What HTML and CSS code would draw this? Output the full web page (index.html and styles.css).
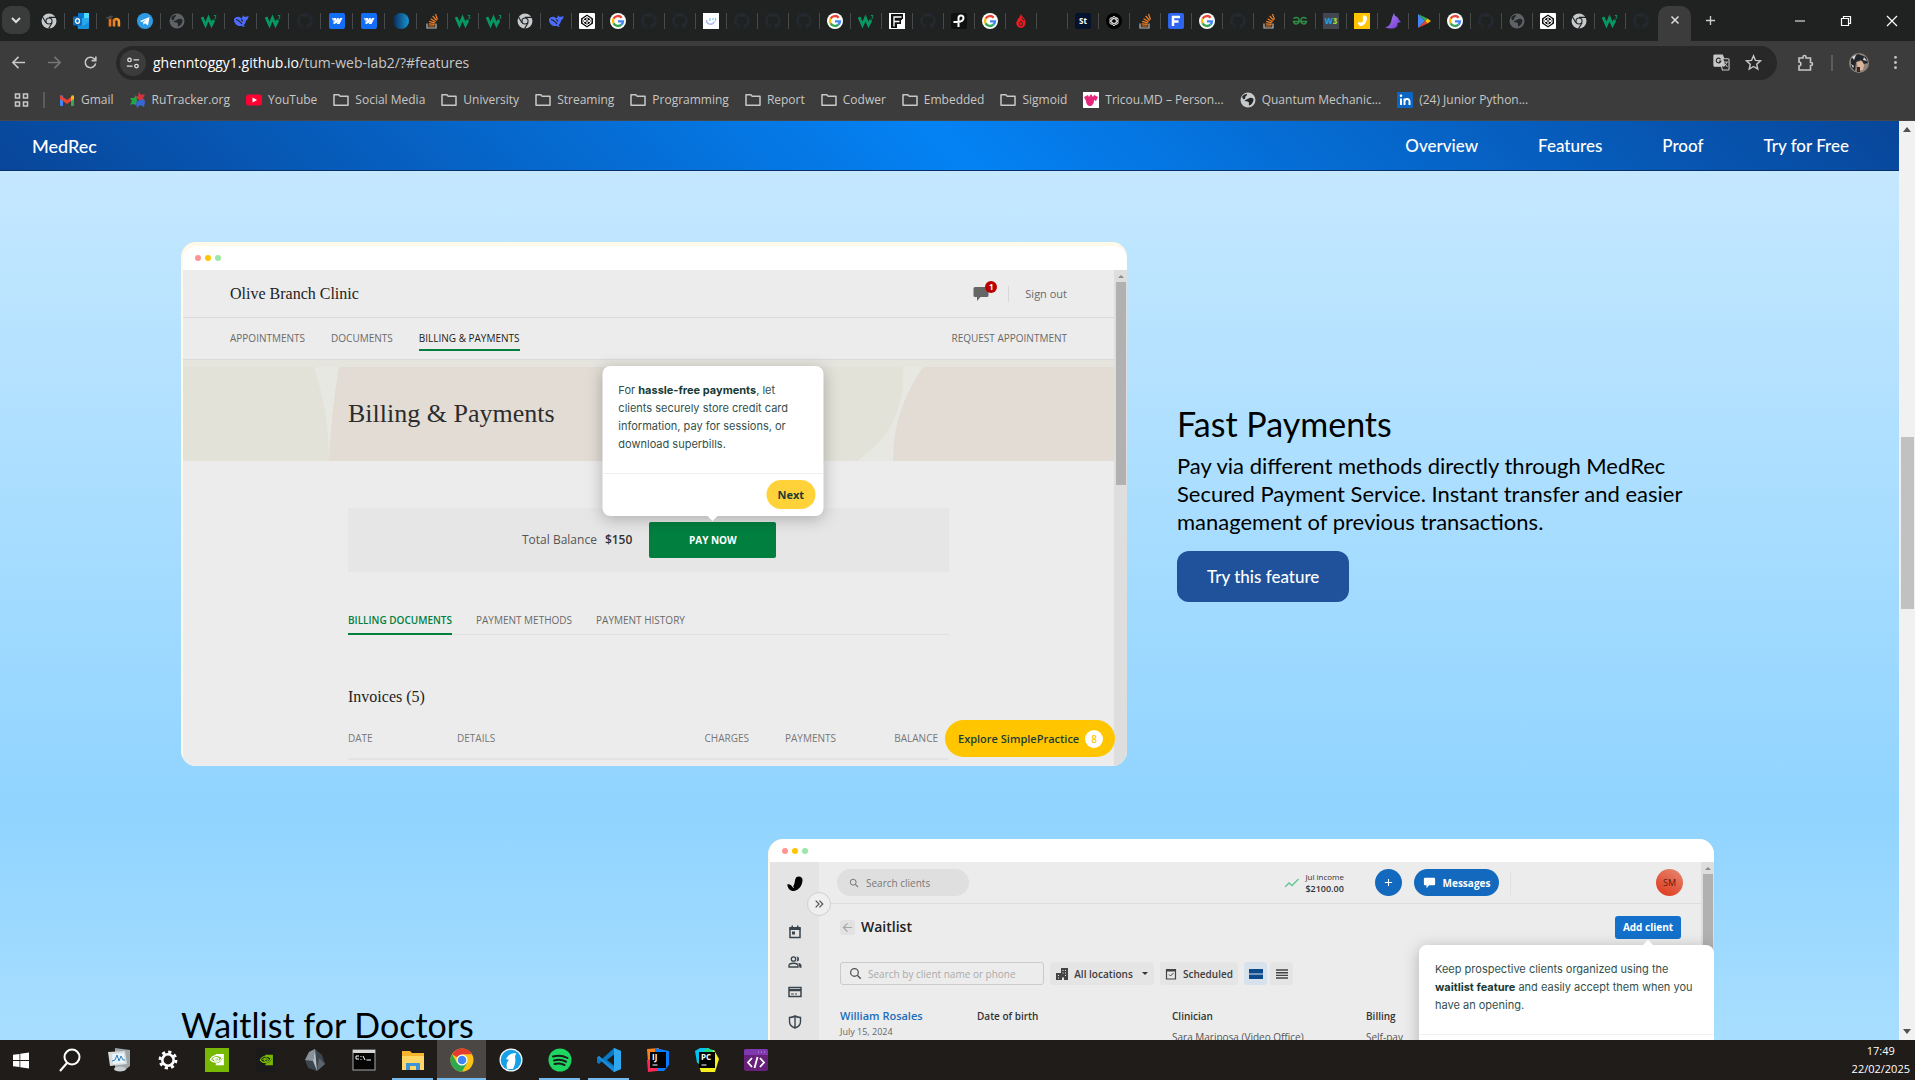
FILE: index.html
```html
<!DOCTYPE html>
<html lang="en">
<head>
<meta charset="utf-8">
<meta name="viewport" content="width=device-width, initial-scale=1">
<title>MedRec</title>
<link rel="stylesheet" href="styles.css">
</head>
<body>
<svg class="sprite" aria-hidden="true">
  <defs>
    <linearGradient id="g-orb"><stop offset="0" stop-color="#0a2a55"/><stop offset="1" stop-color="#1795d6"/></linearGradient>
    <linearGradient id="g-moodle"><stop offset="0" stop-color="#e8731a"/><stop offset="1" stop-color="#f79a32"/></linearGradient>
    <linearGradient id="g-uni" x2="1" y2="1"><stop offset="0" stop-color="#b78cff"/><stop offset="1" stop-color="#6c35c9"/></linearGradient>
  </defs>
  <symbol id="chrome-mono" viewBox="0 0 16 16"><circle cx="8" cy="8" r="7.5" fill="#c7cacd"/><circle cx="8" cy="8" r="3.6" fill="#1f2221"/><circle cx="8" cy="8" r="2.5" fill="#c7cacd"/><path d="M8 4.4h7M4.9 9.8 1.4 3.8M11.1 9.8 7.6 15.6" stroke="#1f2221" stroke-width="1.1"/></symbol>
  <symbol id="outlook" viewBox="0 0 16 16"><rect x="5" y="0" width="11" height="15" rx="1" fill="#28a8ea"/><path d="M5 0h6v5H5z" fill="#0078d4"/><path d="M11 0h5v5h-5z" fill="#50d9ff"/><path d="M4 9l6 4 6-4v6a1 1 0 0 1-1 1H5z" fill="#1490df"/><rect x="0" y="3.500" width="9" height="9" rx="1" fill="#0f6cbd"/><ellipse cx="4.500" cy="8" rx="2" ry="2.300" fill="none" stroke="#fff" stroke-width="1.300"/></symbol>
  <symbol id="moodle" viewBox="0 0 16 16"><path d="M5 13.500V5.500M9 13.500V8.500a2.400 2.400 0 0 1 4.900 0V13.500" fill="none" stroke="url(#g-moodle)" stroke-width="2.600"/><path d="M9 8.500V6" stroke="#e8731a" stroke-width="2.600"/><path d="M0 5l6-2.500 2.500 1L4.500 6.500z" fill="#4b4743"/></symbol>
  <symbol id="telegram" viewBox="0 0 16 16"><circle cx="8" cy="8" r="8" fill="#2f9be6"/><path d="M3 8l9.500-4L11 12.500 8 10.300l-1.500 1.500-.4-2.500L10.500 6 5 9z" fill="#fff"/></symbol>
  <symbol id="globe" viewBox="0 0 16 16"><circle cx="8" cy="8" r="7.500" fill="currentColor"/><path d="M2 5c1-1.500 3-3 5-3.200 0 1.700-.5 2.200-1.500 2.700S6 6.500 4.500 7 3 6.500 2 5zM8.500 6.500c1.500-1 3.500-1 5 .5 0 3-2 6-4.500 6.500-.5-1.500.5-2.500-.5-3.500S5 9.500 4.500 8.500" fill="#232625"/></symbol>
  <symbol id="w3s" viewBox="0 0 16 16"><path d="M1 4l3.500 8L7.500 5l3 7 2.500-5" fill="none" stroke="#059862" stroke-width="2.800"/><path d="M12.800 2.500h2.200l-1 1.500c1.500 0 1.300 2-.8 1.800" fill="none" stroke="#059862" stroke-width=".9"/></symbol>
  <symbol id="whale" viewBox="0 0 16 16"><path d="M1 6c2-2.500 5-3 7.500-.5C10 4 9.500 3 10 2c.5 1 1 1.800 2 1.800 1.500.1 2.500-.4 3.500-1C15.500 6 14 7 13 7.500c-.3 2-1 3.500-2.500 4.500l1.300 1.500c-1 .6-2.300.2-3.300-.7-4 1.200-8-2.500-7.500-6.800z" fill="#4d6bfe"/><path d="M3 6.500c3 .5 4.500 3 6 4.500M8 7c1-.3 2 .5 1.500 1.600" fill="none" stroke="#1f2221" stroke-width="1.100"/></symbol>
  <symbol id="cat" viewBox="0 0 16 16"><path d="M8 0C3.600 0 0 3.600 0 8c0 3.500 2.300 6.500 5.500 7.600.4.100.5-.2.500-.4v-1.500c-2.200.5-2.700-.9-2.700-.9-.4-.9-.9-1.200-.9-1.200-.7-.5.1-.5.1-.5.800.1 1.200.8 1.200.8.700 1.200 1.900.9 2.300.7.100-.5.300-.9.500-1.100-1.800-.2-3.600-.9-3.600-4 0-.9.300-1.600.8-2.100-.1-.2-.4-1 .1-2.100 0 0 .7-.2 2.200.8a7.600 7.600 0 0 1 4 0c1.500-1 2.200-.8 2.200-.8.400 1.100.2 1.900.1 2.100.5.600.8 1.300.8 2.100 0 3.100-1.900 3.700-3.700 3.900.300.300.6.800.6 1.500v2.200c0 .2.100.5.600.4A8 8 0 0 0 8 0z" fill="#24292f"/></symbol>
  <symbol id="webflow" viewBox="0 0 16 16"><rect width="16" height="16" rx="2" fill="#146ef5"/><path d="M13.500 5l-3 6H7.700L9 8.500C8 10 6.500 11 4.500 11V8.600s1.300-.1 2-.9H4.500V5H7v2l1-2h1.800v2l1.200-2z" fill="#fff"/><path d="M3 5h1.500v4z" fill="#fff"/></symbol>
  <symbol id="orb" viewBox="0 0 16 16"><circle cx="8" cy="8" r="8" fill="url(#g-orb)"/></symbol>
  <symbol id="stack" viewBox="0 0 16 16"><path d="M3 10.500V15h9v-4.500" fill="none" stroke="#bcbbbb" stroke-width="1.200"/><path d="M4.500 13h6M4.700 10.800l6 .6M5.200 8.300l5.600 1.600M6.600 5.700l5 3M8.700 3l3.900 4.500M11.500 1l2 5.500" stroke="#f48024" stroke-width="1.200"/></symbol>
  <symbol id="codepen" viewBox="0 0 16 16"><rect width="16" height="16" rx="1" fill="#fff"/><path d="M8 1.500l6 4v5l-6 4-6-4v-5z" fill="#111"/><path d="M8 3.500l4 2.700v3.600l-4 2.700-4-2.700V6.200zM8 3.500v3M8 9.500v3M4 6.200l4 3.300 4-3.300M4 9.800l4-3.300 4 3.300" fill="none" stroke="#fff" stroke-width="1"/></symbol>
  <symbol id="google" viewBox="0 0 16 16"><circle cx="8" cy="8" r="8" fill="#fff"/><g fill="none" stroke-width="2.300"><path d="M11.700 4.700A5 5 0 0 0 3.600 5.600" stroke="#ea4335"/><path d="M3.600 5.600a5 5 0 0 0 0 4.800" stroke="#fbbc05"/><path d="M3.600 10.400a5 5 0 0 0 7.800 1.200" stroke="#34a853"/><path d="M11.400 11.600A5 5 0 0 0 13 8.300H8" stroke="#4285f4"/></g></symbol>
  <symbol id="smile" viewBox="0 0 16 16"><rect width="16" height="16" fill="#fff"/><path d="M3.500 7c0 5 6 5.500 8 1.500" fill="none" stroke="#a7b7ef" stroke-width="1.500"/><path d="M7 5v3M10 5v2M12.500 5v3" stroke="#7ccbe8" stroke-width="1.200"/></symbol>
  <symbol id="flourish" viewBox="0 0 16 16"><rect width="16" height="16" fill="#fff"/><path d="M2 1h12v5h-1v1h-1v4H8v4H2z" fill="#111"/><path d="M5 13.500V4h7.500M5 8.500h5.500" fill="none" stroke="#fff" stroke-width="1.300"/></symbol>
  <symbol id="pin" viewBox="0 0 16 16"><rect width="16" height="16" rx="2" fill="#101010"/><path d="M7.500 14V5c0-3.500 5-3.500 5 0s-4 4-7 4H2.500" fill="none" stroke="#fff" stroke-width="2"/></symbol>
  <symbol id="flame" viewBox="0 0 16 16"><path d="M8 1c1 3 4 4 4.500 7.500C13 12 11 15 8 15s-5.500-3-4.500-6C4 6.500 7 4 8 1z" fill="#e91c24"/><path d="M8 8c-2 2-2 4 0 5 2-1 2-3 0-5M9 5l2 3" stroke="#1f2221" fill="none"/></symbol>
  <symbol id="knot" viewBox="0 0 16 16"><circle cx="8" cy="8" r="8" fill="#000"/><g fill="none" stroke="#ddd" stroke-width=".9"><ellipse cx="8" cy="8" rx="2.300" ry="4.600"/><ellipse cx="8" cy="8" rx="2.300" ry="4.600" transform="rotate(60 8 8)"/><ellipse cx="8" cy="8" rx="2.300" ry="4.600" transform="rotate(120 8 8)"/></g></symbol>
  <symbol id="fblue" viewBox="0 0 16 16"><rect width="16" height="16" rx="2" fill="#2f65ee"/><path d="M5 13V4h7M5 8.500h5.500" fill="none" stroke="#fff" stroke-width="2.500"/></symbol>
  <symbol id="gfg" viewBox="0 0 16 16"><path d="M1.500 5.500c4-2.500 6 0 5.500 3s-5 3.500-5.500 0h13c-.5 3.500-5 3-5.500 0s1.500-5.500 5.500-3" fill="none" stroke="#2f8d46" stroke-width="1.500"/></symbol>
  <symbol id="yellow" viewBox="0 0 16 16"><rect width="16" height="16" fill="#ffc400"/><path d="M9 3c2-1 4 0 4 2 0 4-3 8-6 8-2 0-3.500-2-3-4 2 1 4 .5 5-1 0-2-.5-3.500 0-5z" fill="#fff"/></symbol>
  <symbol id="unicorn" viewBox="0 0 16 16"><path d="M9 0l1 3c2 .5 3.500 2 4 4l2 2-3.500 1c.5 3-1 5-4 5.500-3 .3-5.500 0-8.500-1.500 3 0 5-2 6-5C6.500 6 7.500 3 9 0z" fill="url(#g-uni)"/></symbol>
  <symbol id="play" viewBox="0 0 16 16"><path d="M2 1v14l7-7z" fill="#4285f4"/><path d="M2 1l7 7 2.500-2.500z" fill="#34a853"/><path d="M2 15l7-7 2.500 2.500z" fill="#ea4335"/><path d="M11.500 5.500L15 8l-3.500 2.500L9 8z" fill="#fbbc04"/></symbol>
  <symbol id="folder" viewBox="0 0 16 16"><path d="M1 2.800h4.800l1.400 1.500H15v9H1z" fill="none" stroke="#c7c7c7" stroke-width="1.500" stroke-linejoin="round"/></symbol>
  <symbol id="magnifier" viewBox="0 0 16 16"><circle cx="6.700" cy="6.700" r="4.700" fill="none" stroke="currentColor" stroke-width="1.600"/><path d="M10.200 10.200L14.500 14.500" stroke="currentColor" stroke-width="1.800"/></symbol>
  <symbol id="bubble" viewBox="0 0 16 16"><path d="M2 1h12a1.500 1.500 0 0 1 1.500 1.500v7A1.500 1.500 0 0 1 14 11H7.500L4 15v-4H2A1.500 1.500 0 0 1 .5 9.500v-7A1.500 1.500 0 0 1 2 1z" fill="currentColor"/></symbol>
  <symbol id="nv" viewBox="0 0 24 24"><path d="M1 12c4-7 11-9 19-3-3 8-13 10-19 3z" fill="none" stroke="currentColor" stroke-width="2"/><path d="M5 12c3-4 7-5 10-1-2 5-6 4-7 1 1-2 3-2 4 0" fill="none" stroke="currentColor" stroke-width="2"/><path d="M10 3h13v18H10v-3c5 0 9-3 11-8-3-3-6-4-11-4z" fill="currentColor"/></symbol>
</svg>

<header class="browser">
  <div class="tabstrip">
    <button class="tab-search" aria-label="Search tabs"><svg viewBox="0 0 12 12"><path d="M2 4l4 4 4-4" fill="none" stroke="#ddd" stroke-width="2"/></svg></button>
    <nav class="tabs wide" aria-label="Pinned tabs">
      <button class="tab"><svg><use href="#chrome-mono"/></svg></button>
      <button class="tab"><svg><use href="#outlook"/></svg></button>
      <button class="tab"><svg><use href="#moodle"/></svg></button>
      <button class="tab"><svg><use href="#telegram"/></svg></button>
      <button class="tab dim"><svg><use href="#globe"/></svg></button>
      <button class="tab"><svg><use href="#w3s"/></svg></button>
      <button class="tab"><svg><use href="#whale"/></svg></button>
      <button class="tab"><svg><use href="#w3s"/></svg></button>
      <button class="tab"><svg><use href="#cat"/></svg></button>
      <button class="tab"><svg><use href="#webflow"/></svg></button>
      <button class="tab"><svg><use href="#webflow"/></svg></button>
      <button class="tab"><svg><use href="#orb"/></svg></button>
    </nav>
    <nav class="tabs" aria-label="Open tabs">
      <button class="tab"><svg><use href="#stack"/></svg></button>
      <button class="tab"><svg><use href="#w3s"/></svg></button>
      <button class="tab"><svg><use href="#w3s"/></svg></button>
      <button class="tab"><svg><use href="#chrome-mono"/></svg></button>
      <button class="tab"><svg><use href="#whale"/></svg></button>
      <button class="tab"><svg><use href="#codepen"/></svg></button>
      <button class="tab"><svg><use href="#google"/></svg></button>
      <button class="tab"><svg><use href="#cat"/></svg></button>
      <button class="tab"><svg><use href="#cat"/></svg></button>
      <button class="tab"><svg><use href="#smile"/></svg></button>
      <button class="tab"><svg><use href="#cat"/></svg></button>
      <button class="tab"><svg><use href="#cat"/></svg></button>
      <button class="tab"><svg><use href="#cat"/></svg></button>
      <button class="tab"><svg><use href="#google"/></svg></button>
      <button class="tab"><svg><use href="#w3s"/></svg></button>
      <button class="tab"><svg><use href="#flourish"/></svg></button>
      <button class="tab"><svg><use href="#cat"/></svg></button>
      <button class="tab"><svg><use href="#pin"/></svg></button>
      <button class="tab"><svg><use href="#google"/></svg></button>
      <button class="tab"><svg><use href="#flame"/></svg></button>
      <button class="tab"></button>
      <button class="tab"><svg viewBox="0 0 16 16"><rect width="16" height="16" rx="2" fill="#04122b"/><text x="8" y="11" font-size="8" font-weight="700" text-anchor="middle" fill="#fff">St</text></svg></button>
      <button class="tab"><svg><use href="#knot"/></svg></button>
      <button class="tab"><svg><use href="#stack"/></svg></button>
      <button class="tab"><svg><use href="#fblue"/></svg></button>
      <button class="tab"><svg><use href="#google"/></svg></button>
      <button class="tab"><svg><use href="#cat"/></svg></button>
      <button class="tab"><svg><use href="#stack"/></svg></button>
      <button class="tab"><svg><use href="#gfg"/></svg></button>
      <button class="tab"><svg viewBox="0 0 16 16"><rect width="16" height="16" fill="#41464f"/><text x="8" y="11" font-size="8" font-weight="800" text-anchor="middle" fill="#1f9be0">W<tspan fill="#9bd038">3</tspan></text></svg></button>
      <button class="tab"><svg><use href="#yellow"/></svg></button>
      <button class="tab"><svg><use href="#unicorn"/></svg></button>
      <button class="tab"><svg><use href="#play"/></svg></button>
      <button class="tab"><svg><use href="#google"/></svg></button>
      <button class="tab"><svg><use href="#cat"/></svg></button>
      <button class="tab dim"><svg><use href="#globe"/></svg></button>
      <button class="tab"><svg><use href="#codepen"/></svg></button>
      <button class="tab"><svg><use href="#chrome-mono"/></svg></button>
      <button class="tab"><svg><use href="#w3s"/></svg></button>
      <button class="tab last"><svg><use href="#cat"/></svg></button>
    </nav>
    <button class="tab-active" aria-label="Close tab"><svg viewBox="0 0 10 10"><path d="M1.500 1.500l7 7M8.500 1.500l-7 7" stroke="#ddd" stroke-width="1.500"/></svg></button>
    <button class="new-tab" aria-label="New tab"><svg viewBox="0 0 12 12"><path d="M6 1v10M1 6h10" stroke="#ccc" stroke-width="1.500"/></svg></button>
    <div class="window-controls">
      <button aria-label="Minimize"><svg viewBox="0 0 12 12"><path d="M1 6h10" stroke="#fff"/></svg></button>
      <button aria-label="Restore"><svg viewBox="0 0 12 12"><path d="M1.500 3.500h7v7h-7zM3.500 3.500v-2h7v7h-2" fill="none" stroke="#fff" stroke-width="1.200"/></svg></button>
      <button aria-label="Close"><svg viewBox="0 0 12 12"><path d="M1 1l10 10M11 1L1 11" stroke="#fff" stroke-width="1.200"/></svg></button>
    </div>
  </div>

  <div class="toolbar">
    <button class="tool" aria-label="Back"><svg viewBox="0 0 16 16"><path d="M15 8H2.500M8 2L2 8l6 6" fill="none" stroke="#c7c7c7" stroke-width="1.700"/></svg></button>
    <button class="tool" aria-label="Forward"><svg viewBox="0 0 16 16"><path d="M1 8h12.500M8 2l6 6-6 6" fill="none" stroke="#767676" stroke-width="1.700"/></svg></button>
    <button class="tool" aria-label="Reload"><svg viewBox="0 0 16 16"><path d="M13.500 9A5.600 5.600 0 1 1 12 4l1.500 1.800M13.700 1.500V6H9.200" fill="none" stroke="#c7c7c7" stroke-width="1.700"/></svg></button>
    <div class="omnibox">
      <button class="site-info" aria-label="Site information"><svg viewBox="0 0 16 16"><g fill="none" stroke="#ddd" stroke-width="1.500"><circle cx="4" cy="4.500" r="2"/><circle cx="12" cy="11.500" r="2"/><path d="M8.500 4.500H15M1 11.500h6.500"/></g></svg></button>
      <span class="url">ghenntoggy1.github.io<span class="path">/tum-web-lab2/?#features</span></span>
      <button class="omni-btn" aria-label="Translate"><svg viewBox="0 0 18 18"><path d="M2 1h8l1.500 4H16a1 1 0 0 1 1 1v10a1 1 0 0 1-1 1h-6l-1-4H2a1 1 0 0 1-1-1V2a1 1 0 0 1 1-1z" fill="none" stroke="#c7c7c7" stroke-width="1.200"/><path d="M1 1h9l3 12H1z" fill="#c7c7c7"/><path d="M8 5.500a2.500 2.500 0 1 0 .3 2H6.500" fill="none" stroke="#282828" stroke-width="1.200"/><path d="M11.500 8.500H16M14.500 8.500c0 2-2 4-3.500 4.500M12.500 10l3 4" fill="none" stroke="#c7c7c7"/></svg></button>
      <button class="omni-btn" aria-label="Bookmark"><svg viewBox="0 0 18 18"><path d="M9 2l2.100 4.800 5.200.5-3.900 3.500 1.100 5.100L9 13.200l-4.500 2.700 1.100-5.100L1.700 7.300l5.200-.5z" fill="none" stroke="#c7c7c7" stroke-width="1.500"/></svg></button>
    </div>
    <button class="tool ext" aria-label="Extensions"><svg viewBox="0 0 18 18"><path d="M3 4h4V3a1.500 1.500 0 0 1 3 0v1h4.500v4.500h.5a1.500 1.500 0 0 1 0 3h-.5V16H3v-4c2.500 0 2.500-4 0-4z" fill="none" stroke="#c7c7c7" stroke-width="1.600"/></svg></button>
    <span class="divider"></span>
    <button class="tool" aria-label="Profile"><svg class="avatar" viewBox="0 0 20 20"><circle cx="10" cy="10" r="10" fill="#8d8278"/><path d="M2 6l7-5 8 3 2 6-4 1-3-4-5 2-1 9-4-4z" fill="#23262b"/><path d="M8 9l5-1 2 4-1 5-5 1z" fill="#dbb49b"/><path d="M3 4l4-2-2 5zM15 4l3 4-4-1zM2 11l3 2-1 2z" fill="#d8dadd"/><path d="M8 14h3v5H8z" fill="#38281f"/></svg></button>
    <button class="tool more" aria-label="Menu"><svg viewBox="0 0 16 16"><g fill="#c7c7c7"><circle cx="8" cy="2.500" r="1.500"/><circle cx="8" cy="8" r="1.500"/><circle cx="8" cy="13.500" r="1.500"/></g></svg></button>
  </div>

  <nav class="bookmarks" aria-label="Bookmarks">
    <button class="apps" aria-label="Apps"><svg viewBox="0 0 14 14"><g fill="none" stroke="#c7c7c7" stroke-width="1.600"><path d="M1 1h4v4H1zM9 1h4v4H9zM1 9h4v4H1zM9 9h4v4H9z"/></g></svg></button>
    <span class="divider"></span>
    <a href="#gmail"><svg viewBox="0 0 16 16"><path d="M1 3.500h3V14H2a1 1 0 0 1-1-1z" fill="#4285f4"/><path d="M12 3.500h3V13a1 1 0 0 1-1 1h-2z" fill="#34a853"/><path d="M1 3l3 2 4 3 4-3v4l-4 3-4-3-3-2z" fill="#ea4335"/><path d="M12 5l1.500-1.700L15 4v3l-3 2z" fill="#fbbc04"/></svg>Gmail</a>
    <a href="#rutracker"><svg viewBox="0 0 16 16"><path d="M9 0l2 3 4-1-2 4 2 3-6-1-4-3 3-1z" fill="#d3353c"/><path d="M0 6l4 0 2-3 1 5-1 5-3-1-3 1 2-4z" fill="#22a648"/><path d="M7 9l7-2 1 3-1 5-4-2-3 3-1-4z" fill="#3568d4"/></svg>RuTracker.org</a>
    <a href="#youtube"><svg viewBox="0 0 16 16"><rect x="0" y="2.500" width="16" height="11" rx="2.500" fill="#ff0033"/><path d="M6.500 5.500v5L11 8z" fill="#fff"/></svg>YouTube</a>
    <a href="#social"><svg><use href="#folder"/></svg>Social Media</a>
    <a href="#university"><svg><use href="#folder"/></svg>University</a>
    <a href="#streaming"><svg><use href="#folder"/></svg>Streaming</a>
    <a href="#programming"><svg><use href="#folder"/></svg>Programming</a>
    <a href="#report"><svg><use href="#folder"/></svg>Report</a>
    <a href="#codwer"><svg><use href="#folder"/></svg>Codwer</a>
    <a href="#embedded"><svg><use href="#folder"/></svg>Embedded</a>
    <a href="#sigmoid"><svg><use href="#folder"/></svg>Sigmoid</a>
    <a href="#tricou"><svg viewBox="0 0 16 16"><rect width="16" height="16" fill="#fff"/><path d="M1 5l4-2 1 2 2-3 2 3 1-2 4 2-2 4-2-1c0 4-2 6-4 6s-4-2-4-5L3 9z" fill="#e5267b"/></svg>Tricou.MD – Person...</a>
    <a href="#quantum"><svg class="light"><use href="#globe"/></svg>Quantum Mechanic...</a>
    <a href="#linkedin"><svg viewBox="0 0 16 16"><rect width="16" height="16" rx="1" fill="#0a66c2"/><path d="M4 6.500V13M7.500 13V6.500M7.500 9.500c0-3 5-3.500 5 0V13" fill="none" stroke="#fff" stroke-width="2"/><circle cx="4" cy="3.800" r="1.300" fill="#fff"/></svg>(24) Junior Python...</a>
  </nav>
</header>

<div class="viewport">
  <div class="page">
    <header class="site-nav">
      <a class="brand" href="#home">MedRec</a>
      <nav class="links">
        <a href="#overview">Overview</a>
        <a href="#features">Features</a>
        <a href="#proof">Proof</a>
        <a href="#try">Try for Free</a>
      </nav>
    </header>

    <main class="features" id="features">
      <section class="feature">
        <div class="shot payments">
          <div class="shot-bar"><i></i><i></i><i></i></div>
          <div class="shot-body">
            <div class="clinic">
              <div class="clinic-head">
                <strong>Olive Branch Clinic</strong>
                <span class="chat"><svg><use href="#bubble"/></svg><b>1</b></span>
                <a class="sign-out" href="#signout">Sign out</a>
              </div>
              <nav class="clinic-nav">
                <a href="#appointments">APPOINTMENTS</a>
                <a href="#documents">DOCUMENTS</a>
                <a href="#billing" class="current">BILLING &amp; PAYMENTS</a>
                <a href="#request" class="request">REQUEST APPOINTMENT</a>
              </nav>
              <div class="banner">
                <svg viewBox="0 0 931 93" preserveAspectRatio="none" aria-hidden="true"><path d="M0 0H131Q146 45 146 93H0z" fill="#e2e2d9"/><path d="M156 0H560V93H146Q148 45 156 0z" fill="#e2dcd5"/><path d="M560 0H720Q724 60 674 93H560z" fill="#e2e2d9"/><path d="M740 0H931V93H710Q709 45 740 0z" fill="#e2dcd5"/></svg>
                <h3>Billing &amp; Payments</h3>
              </div>
              <div class="clinic-content">
                <div class="balance">
                  <span>Total Balance</span><b>$150</b>
                  <div class="anchor">
                    <button class="pay">PAY NOW</button>
                    <div class="tip tip-above">
                      <p>For <b>hassle-free payments</b>, let clients securely store credit card information, pay for sessions, or download superbills.</p>
                      <div class="tip-foot"><button class="next">Next</button></div>
                    </div>
                  </div>
                </div>
                <nav class="doc-tabs">
                  <a href="#docs" class="current">BILLING DOCUMENTS</a>
                  <a href="#methods">PAYMENT METHODS</a>
                  <a href="#history">PAYMENT HISTORY</a>
                </nav>
                <h4>Invoices (5)</h4>
                <table class="invoices">
                  <thead><tr><th class="date">DATE</th><th>DETAILS</th><th class="num">CHARGES</th><th class="num pay-col">PAYMENTS</th><th class="num bal-col">BALANCE</th></tr></thead>
                </table>
              </div>
            </div>
            <div class="mini-scroll"><span class="up"></span><span class="thumb"></span></div>
          </div>
          <button class="explore">Explore SimplePractice<span>8</span></button>
        </div>
        <div class="copy">
          <h2>Fast Payments</h2>
          <p>Pay via different methods directly through MedRec Secured Payment Service. Instant transfer and easier management of previous transactions.</p>
          <a class="cta" href="#try">Try this feature</a>
        </div>
      </section>

      <section class="feature reverse">
        <div class="copy">
          <h2>Waitlist for Doctors</h2>
        </div>
        <div class="shot waitlist">
          <div class="shot-bar"><i></i><i></i><i></i></div>
          <div class="shot-body">
            <nav class="side" aria-label="Sections">
              <svg class="logo" viewBox="0 0 16 16"><path d="M9.500 1c3-1.500 6 0 6 3 0 5-3.500 10.500-8.500 11C3.500 15.300.500 12.500.300 8.500c2-.7 4 .3 5 2.500C8.500 9 7 4 9.500 1z"/><path d="M5 8.500l1.500 3.500" stroke="#e4e4e4" stroke-width=".8"/></svg>
              <button class="expand" aria-label="Expand"><svg viewBox="0 0 12 12"><path d="M2 2l4 4-4 4M6.500 2l4 4-4 4" fill="none" stroke="#555" stroke-width="1.500"/></svg></button>
              <svg viewBox="0 0 14 14"><path d="M2 3h10v9.500H2z" fill="none" stroke="#3a444c" stroke-width="1.500"/><path d="M1.500 2h11v3h-11zM3.500.5h1.500V3H3.500zM9 .5h1.500V3H9zM4 6.500h3v3H4z" fill="#3a444c"/></svg>
              <svg viewBox="0 0 14 14"><g fill="none" stroke="#3a444c" stroke-width="1.300"><circle cx="5.500" cy="4" r="2.200"/><path d="M1 12v-1.500c0-3 9-3 9 0V12z"/></g><path d="M8.500 1.500a2.500 2.500 0 1 1 0 5c1-1.500 1-3.500 0-5zM10.500 8c2 .3 3 1.200 3 2.700v2h-2z" fill="#3a444c"/></svg>
              <svg viewBox="0 0 14 14"><path d="M1 2.500h12v9H1z" fill="none" stroke="#3a444c" stroke-width="1.500"/><path d="M1 4h12v2.200H1zM3 8.500h3v1H3zM7 8.500h2v1H7z" fill="#3a444c"/></svg>
              <svg viewBox="0 0 14 14"><path d="M7 1c2 1 4 1.500 5.500 1.500v4c0 3-2.500 5.500-5.500 6.500-3-1-5.500-3.500-5.500-6.500v-4C3 2.500 5 2 7 1zM7 1v12" fill="none" stroke="#3a444c" stroke-width="1.400"/></svg>
            </nav>
            <div class="panel">
              <div class="panel-top">
                <label class="pill-search"><svg><use href="#magnifier"/></svg><input type="text" placeholder="Search clients" aria-label="Search clients"></label>
                <div class="income"><svg viewBox="0 0 14 10"><path d="M0 9l4-4 3 2.500L13.500 1" fill="none" stroke="#5fc796" stroke-width="1.300"/></svg><p>Jul income<b>$2100.00</b></p></div>
                <button class="plus" aria-label="Add"><svg viewBox="0 0 10 10"><path d="M5 1v8M1 5h8" stroke="#fff" stroke-width="1.200"/></svg></button>
                <button class="messages"><svg><use href="#bubble"/></svg>Messages</button>
                <span class="sep"></span>
                <span class="sm">SM</span>
              </div>
              <div class="panel-title">
                <button class="back" aria-label="Back"><svg viewBox="0 0 12 12"><path d="M11 6H2M6 1.500L1.500 6 6 10.500" fill="none" stroke="#a5a5a5" stroke-width="1.300"/></svg></button>
                <h3>Waitlist</h3>
                <div class="anchor">
                  <button class="add">Add client</button>
                  <div class="tip tip-below">
                    <p>Keep prospective clients organized using the <b>waitlist feature</b> and easily accept them when you have an opening.</p>
                    <div class="tip-foot"></div>
                  </div>
                </div>
              </div>
              <div class="filters">
                <label class="client-search"><svg><use href="#magnifier"/></svg><input type="text" placeholder="Search by client name or phone" aria-label="Search by client name or phone"></label>
                <button class="filter loc"><svg viewBox="0 0 12 12"><path d="M5 0h7v12H8V9.500H6V12H0V5h5z" fill="#444"/><path d="M6.500 2h1v1h-1zM9 2h1v1H9zM6.500 4.500h1v1h-1zM9 4.500h1v1H9zM9 7h1v1H9zM2 7h1v1H2zM2 9.500h1v1H2z" fill="#ececec"/></svg>All locations<i></i></button>
                <button class="filter"><svg viewBox="0 0 12 12"><path d="M1.500 2h9v9h-9z" fill="none" stroke="#444" stroke-width="1.200"/><path d="M1 1h10v2.500H1z" fill="#444"/><path d="M4 6.500l1.500 1.500L8.500 5" fill="none" stroke="#444"/></svg>Scheduled</button>
                <button class="filter view on" aria-label="Cards"><svg viewBox="0 0 14 12"><path d="M0 1h14v4.500H0zM0 6.500h14V11H0z" fill="#0c4a8c"/></svg></button>
                <button class="filter view" aria-label="Rows"><svg viewBox="0 0 14 12"><path d="M1 2h12M1 4.700h12M1 7.400h12M1 10h12" stroke="#444" stroke-width="1.400"/></svg></button>
              </div>
              <div class="client">
                <div><a href="#william">William Rosales</a><small>July 15, 2024</small></div>
                <div><b>Date of birth</b></div>
                <div><b>Clinician</b><span>Sara Mariposa (Video Office)</span></div>
                <div><b>Billing</b><span>Self-pay</span></div>
              </div>
            </div>
            <div class="mini-scroll"><span class="up"></span><span class="thumb short"></span></div>
          </div>
        </div>
      </section>
    </main>
  </div>
  <div class="scrollbar"><span class="up"></span><span class="thumb"></span><span class="down"></span></div>
</div>

<footer class="taskbar">
  <button class="task start" aria-label="Start"><svg viewBox="0 0 16 16"><path d="M0 2.300L6.500 1.400v6.200H0zM7.300 1.300L16 0v7.600H7.300zM0 8.400h6.500v6.200L0 13.700zM7.300 8.400H16V16l-8.700-1.300z" fill="#fff"/></svg></button>
  <button class="task" aria-label="Search"><svg viewBox="0 0 24 24"><circle cx="14" cy="9" r="7.500" fill="none" stroke="#fff" stroke-width="2"/><path d="M9 15l-7 8" stroke="#fff" stroke-width="2"/></svg></button>
  <button class="task" aria-label="Monitor"><svg viewBox="0 0 24 24"><path d="M8 0l15 2v16l-5 4H8z" fill="#9fa6a8"/><path d="M1 4l17-1 2 13-17 2z" fill="#d7dbdc"/><path d="M5 6l12-1 1 10-12 1z" fill="#e9f3fa"/><path d="M5 13l3-1 2-5 2 6 2-5 2 4h2" fill="none" stroke="#2e7fc0"/><ellipse cx="13" cy="21" rx="6" ry="2.500" fill="#c9cdcf"/></svg></button>
  <button class="task" aria-label="Settings"><svg viewBox="0 0 24 24"><circle cx="12" cy="12" r="5.700" fill="none" stroke="#fff" stroke-width="2.600"/><circle cx="12" cy="12" r="8" fill="none" stroke="#fff" stroke-width="2.800" stroke-dasharray="3.140 3.140"/></svg></button>
  <button class="task" aria-label="GeForce"><svg viewBox="0 0 24 24"><rect width="24" height="24" fill="#76b900"/><svg x="4" y="4" width="16" height="15" color="#fff" viewBox="0 0 24 24"><use href="#nv"/></svg></svg></button>
  <button class="task" aria-label="Driver"><svg viewBox="0 0 24 24"><rect x="2" width="20" height="24" fill="#1a1a1a"/><svg x="4" y="5" width="17" height="14" color="#76b900" viewBox="0 0 24 24"><use href="#nv"/></svg></svg></button>
  <button class="task" aria-label="Stone"><svg viewBox="0 0 24 24"><path d="M12 1l7 6 3 9-8 7-9-3-3-8 4-8z" fill="#3c444c"/><path d="M12 1l-2 12-8-1 4-8z" fill="#87929b"/><path d="M12 1l2 22-4-10z" fill="#b5bec5"/><path d="M14 23l8-7-6-6z" fill="#5b656e"/></svg></button>
  <button class="task" aria-label="Terminal"><svg viewBox="0 0 24 24"><rect x="1" y="2" width="22" height="20" fill="#050505" stroke="#a8a8a8"/><path d="M1 2h22v3H1z" fill="#d6d6d6"/><path d="M7 8H4v3h3M9 8v1M9 11v.8M11 8l2 4M14.500 12H19" fill="none" stroke="#fff"/></svg></button>
  <button class="task open" aria-label="Files"><svg viewBox="0 0 24 24"><path d="M1 3h8l2 2h12v17H1z" fill="#f5b52e"/><path d="M1 8h22v14H1z" fill="#ffd766"/><path d="M5 22v-7h14v7h-4v-4H9v4z" fill="#3f93d8"/></svg></button>
  <button class="task open active" aria-label="Chrome"><svg viewBox="0 0 24 24"><circle cx="12" cy="12" r="11.500" fill="#fbc116"/><path d="M12 12L2 6.200A11.500 11.500 0 0 1 22 6.200H12z" fill="#e33b2e"/><path d="M2 6.200A11.500 11.500 0 0 0 12 23.500L17 15H7z" fill="#2da94f"/><circle cx="12" cy="12" r="5.500" fill="#fff"/><circle cx="12" cy="12" r="4.300" fill="#4285f4"/></svg></button>
  <button class="task" aria-label="Wolf"><svg viewBox="0 0 24 24"><circle cx="12" cy="12" r="11.500" fill="#fff"/><circle cx="12" cy="12" r="10.300" fill="#15a0e8"/><path d="M8 21c-1-5 0-7 2-9l-3-1c2-4 5-6 10-6l-1 4c1 4 0 8-2 12z" fill="#fff"/></svg></button>
  <button class="task open" aria-label="Spotify"><svg viewBox="0 0 24 24"><circle cx="12" cy="12" r="11.500" fill="#1ed760"/><path d="M5 8.500c5-1.500 10-1 14.500 1.500M6 12.500c4-1.200 8.500-.8 12 1.200M6.500 16c3.500-1 7-.6 10 1" fill="none" stroke="#1a1a1a" stroke-width="2" stroke-linecap="round"/></svg></button>
  <button class="task open" aria-label="Code"><svg viewBox="0 0 24 24"><path d="M17 0l7 3v18l-7 3L5 13l-3 3-2-1.500V9.500L2 8l3 3z" fill="#0a78c4"/><path d="M0 9.500L2 8l16 13-1 3z" fill="#1b8ad6"/><path d="M17 0l7 3v18l-7 3z" fill="#2fa8f0"/><path d="M17 6.500v11L10 12z" fill="#1f1c1a"/></svg></button>
  <button class="task" aria-label="IDEA"><svg viewBox="0 0 24 24"><path d="M1 1l12-1-3 12-8 2z" fill="#fc801d"/><path d="M9 0l14 3v14l-5 6H9z" fill="#087cfa"/><path d="M1 12l10-2v13l-9 1z" fill="#fe2857"/><rect x="4" y="4" width="16" height="16" fill="#000"/><text x="6" y="12" font-size="8" font-weight="700" fill="#fff">IJ</text><path d="M6.500 17h5" stroke="#fff"/></svg></button>
  <button class="task" aria-label="PyCharm"><svg viewBox="0 0 24 24"><path d="M0 3l5-3h9l2 12-14 3z" fill="#07c3f2"/><path d="M12 3l7-1 5 9-4 13H6l-2-6z" fill="#f7ee1d"/><path d="M12 0l6 2-2 12-13 2L7 4z" fill="#21d789"/><rect x="4" y="4" width="16" height="16" fill="#000"/><text x="6" y="12" font-size="8" font-weight="700" fill="#fff">PC</text><path d="M6.500 17h5" stroke="#fff"/></svg></button>
  <button class="task" aria-label="Dev"><svg viewBox="0 0 24 24"><rect x="0" y="1" width="24" height="22" rx="2" fill="#68217a"/><path d="M0 3a2 2 0 0 1 2-2h20a2 2 0 0 1 2 2v4H0z" fill="#7f38ae"/><path d="M8 10l-4 4.500L8 19M16 10l4 4.500L16 19M13.500 9l-3 11" fill="none" stroke="#fff" stroke-width="1.800"/><path d="M14 4h1M17 4h1M20 4h1" stroke="#c9a6e0"/></svg></button>
  <div class="clock"><time>17:49</time><time>22/02/2025</time></div>
</footer>
</body>
</html>
```
FILE: styles.css
```css
* { box-sizing: border-box; }

:root {
  --ui: "Open Sans", "Noto Sans", sans-serif;
  --human: Lato, "Noto Sans", sans-serif;
  --book: "Liberation Serif", serif;
  --tip: Inter, "Liberation Sans", sans-serif;
}

html, body { height: 100%; margin: 0; }
body {
  display: flex;
  flex-direction: column;
  overflow: hidden;
  font-family: var(--ui);
  color: #000;
}
button { margin: 0; padding: 0; border: 0; background: none; font-family: inherit; color: inherit; }
a { color: inherit; text-decoration: none; }
h2, h3, h4, p { margin: 0; font-weight: 400; }
svg { display: block; flex: none; }
.sprite { position: absolute; width: 0; height: 0; }

/* Browser frame */
.browser { flex: none; background: #3c3c3c; border-bottom: 1px solid #474747; }
.tabstrip { display: flex; align-items: center; height: 41px; padding-left: 2px; background: #1f2221; }
.tab-search { display: grid; place-items: center; width: 28px; height: 28px; margin: 0 3px 2px 0; border-radius: 9px; background: #3a3b3b; }
.tab-search svg { width: 12px; height: 12px; }
.tabs { display: flex; align-items: center; }
.tab { display: grid; place-items: center; width: 31px; height: 16px; border-right: 1px solid #48494a; }
.wide .tab { width: 32px; }
.tab.last { border-color: transparent; }
.tab svg { width: 16px; height: 16px; }
.dim { color: #5f6368; }
.tab-active { display: grid; place-items: center; align-self: flex-end; width: 33px; height: 35px; margin: 0 4px 0 1px; border-radius: 10px 10px 0 0; background: #3c3c3c; }
.tab-active svg { width: 10px; height: 10px; margin-bottom: 7px; }
.new-tab { display: grid; place-items: center; width: 30px; height: 28px; }
.new-tab svg { width: 11px; height: 11px; }
.window-controls { display: flex; margin-left: auto; }
.window-controls button { display: grid; place-items: center; width: 46px; height: 30px; }
.window-controls svg { width: 12px; height: 12px; }

.toolbar { display: flex; align-items: center; height: 43px; padding: 0 2px 0 0; }
.tool { display: grid; place-items: center; width: 36px; height: 32px; }
.tool svg { width: 15px; height: 15px; }
.omnibox { display: flex; flex: 1; align-items: center; height: 34px; margin: 0 10px 0 8px; padding: 0 8px 0 4px; border-radius: 17px; background: #282828; }
.site-info { display: grid; place-items: center; width: 26px; height: 26px; border-radius: 13px; background: #3c3c3c; }
.site-info svg { width: 14px; height: 14px; }
.url { flex: 1; padding-left: 7px; font-size: 14px; line-height: 20px; color: #fff; }
.path { color: #c7c7c7; }
.omni-btn { display: grid; place-items: center; width: 32px; height: 28px; }
.omni-btn svg { width: 17px; height: 17px; }
.ext svg { width: 18px; height: 18px; }
.divider { width: 2px; height: 16px; background: #5c5c5c; }
.toolbar .divider { margin: 0 8px; }
.tool .avatar { width: 20px; height: 20px; }

.bookmarks { display: flex; align-items: center; gap: 16px; height: 36px; padding: 0 14px 4px; font-size: 12px; line-height: 18px; color: #c7c7c7; }
.bookmarks a { display: flex; align-items: center; gap: 6px; white-space: nowrap; }
.bookmarks svg { width: 16px; height: 16px; }
.bookmarks .divider { margin: 0 -2px; }
.bookmarks .apps svg { width: 15px; height: 14px; }
.light { color: #c7cacd; }

/* Scrolled page */
.viewport { display: flex; flex: 1; min-height: 0; }
.page { flex: 1; min-width: 0; overflow: hidden; background: linear-gradient(#c9eaff 0, #c3e7ff 70px, #90d4ff 690px, #a8deff 919px); }
.site-nav { display: flex; align-items: center; justify-content: space-between; height: 50px; padding: 0 50px 0 32px; border-bottom: 1px solid #07306c; background: linear-gradient(45deg, #08469a, #0482f4 50%, #08469a); font-family: var(--human); font-size: 18px; font-weight: 500; line-height: 24px; color: #fff; }
.links { display: flex; gap: 60px; font-size: 17px; }
.features { display: flex; flex-direction: column; gap: 73px; padding: 71px 185px 0 181px; }
.feature { display: grid; grid-template-columns: 946fr 537fr; gap: 50px; align-items: center; }
.feature.reverse { grid-template-columns: 537fr 946fr; align-items: start; }
.copy { margin-bottom: 4px; font-family: var(--human); }
.reverse .copy { padding-top: 164px; }
.copy h2 { font-size: 34px; line-height: 44px; }
.copy p { margin-top: 6px; font-size: 22px; line-height: 28px; }
.cta { display: inline-block; margin-top: 15px; padding: 14px 30px; border-radius: 12px; background: #20529b; font-size: 17px; font-weight: 500; line-height: 23px; color: #fff; }

.scrollbar { display: flex; flex-direction: column; align-items: center; width: 16px; padding: 6px 0; background: #f1f1f1; }
.up { border: 4px solid transparent; border-top: 0; border-bottom: 5px solid #505050; }
.down { margin-top: auto; border: 4px solid transparent; border-bottom: 0; border-top: 5px solid #505050; }
.scrollbar .thumb { width: 13px; height: 19%; margin-top: 305px; background: #c1c1c1; }

/* Product screenshots */
.shot { position: relative; overflow: hidden; border-radius: 15px; background: #fff9e9; padding-left: 2px; }
.payments { padding-top: 4px; }
.shot-bar { display: flex; align-items: center; gap: 4px; height: 24px; padding-left: 12px; border-radius: 14px 14px 0 0; background: #fff; }
.shot-bar i { width: 6px; height: 6px; border-radius: 3px; background: #ff9592; }
.shot-bar i:nth-child(2) { background: #ffc500; }
.shot-bar i:nth-child(3) { background: #99e8a8; }
.shot-body { display: flex; background: #ececec; }
.mini-scroll { display: flex; flex: none; flex-direction: column; align-items: center; width: 13px; padding-top: 5px; background: #dedede; }
.mini-scroll .up { border-width: 0 3px 3px; border-bottom-color: #8b8b8b; }
.mini-scroll .thumb { width: 10px; height: 203px; margin-top: 4px; background: #b1b1b1; }
.mini-scroll .short { height: 180px; }

.clinic { flex: 1; min-width: 0; height: 496px; color: #6a6a6a; }
.clinic-head { display: flex; align-items: center; height: 48px; padding: 0 47px; border-bottom: 1px solid #dadada; }
.clinic-head strong { flex: 1; font-family: var(--book); font-size: 16px; font-weight: 400; line-height: 22px; color: #222; }
.chat { position: relative; padding-right: 19px; border-right: 1px solid #d8d8d8; color: #666; }
.chat svg { width: 16px; height: 16px; }
.chat b { position: absolute; left: 12px; top: -5px; width: 12px; height: 12px; border-radius: 6px; background: #b80000; font-size: 8px; line-height: 12px; text-align: center; color: #fff; }
.sign-out { margin-left: 16px; font-size: 11px; line-height: 16px; }
.clinic-nav { display: flex; align-items: center; gap: 26px; height: 42px; padding: 0 47px; border-bottom: 1px solid #dadada; font-size: 10px; font-weight: 500; line-height: 22px; }
.clinic-nav a { border-bottom: 2px solid transparent; }
.clinic-nav .current { border-color: #007f3f; color: #222; }
.clinic-nav .request { margin-left: auto; }
.banner { position: relative; display: flex; align-items: center; height: 101px; padding-left: 165px; border-top: 7px solid #e5e5de; background: #e8e8e2; }
.banner svg { position: absolute; inset: 0; width: 100%; height: 100%; }
.banner h3 { position: relative; font-family: var(--book); font-size: 26px; line-height: 32px; color: #2c2c2c; }
.clinic-content { padding: 47px 165px 0; }
.balance { display: flex; align-items: center; height: 64px; padding-left: 174px; background: #e6e6e6; font-size: 12px; line-height: 18px; color: #555; }
.balance > b { margin: 0 17px 0 8px; font-weight: 600; color: #333; }
.anchor { position: relative; }
.pay { display: block; width: 127px; height: 36px; border-radius: 2px; background: #007f3f; font-size: 10px; font-weight: 700; color: #fff; }
.tip { position: absolute; z-index: 2; border-radius: 8px; background: #fff; box-shadow: 0 3px 16px rgba(0, 0, 0, .25); font-family: var(--tip); font-size: 11px; line-height: 18px; color: #33504d; }
.tip b { color: #173a36; font-weight: 700; }
.tip p { padding: 15px 16px 0; }
.tip::after { content: ""; position: absolute; left: 50%; margin-left: -5px; border: 5px solid transparent; }
.tip-above { bottom: calc(100% + 6px); left: 50%; width: 221px; height: 150px; transform: translateX(-50%); }
.tip-above p { height: 107px; }
.tip-above::after { top: 100%; border-top-color: #fff; border-bottom: 0; }
.tip-foot { display: flex; justify-content: flex-end; padding: 6px 8px; border-top: 1px solid #f0f0f0; }
.next { width: 49px; height: 29px; border-radius: 15px; background: #ffd23a; font-family: var(--ui); font-size: 11px; font-weight: 700; color: #1d3b37; }
.doc-tabs { display: flex; gap: 24px; margin-top: 35px; border-bottom: 1px solid #e0e0e0; font-size: 10px; font-weight: 500; line-height: 26px; }
.doc-tabs a { margin-bottom: -1px; border-bottom: 2px solid transparent; }
.doc-tabs .current { border-color: #007f3f; font-weight: 600; color: #007f3f; }
.clinic-content h4 { margin-top: 51px; font-family: var(--book); font-size: 16px; line-height: 22px; color: #222; }
.invoices { width: 100%; margin-top: 20px; border-collapse: collapse; border-bottom: 2px solid #e3e3e3; font-size: 10px; line-height: 20px; color: #777; table-layout: fixed; }
.invoices th { padding: 0 0 10px; font-weight: 400; text-align: left; }
.invoices .date { width: 109px; }
.invoices .num { text-align: right; }
.invoices .pay-col { width: 87px; }
.invoices .bal-col { width: 113px; padding-right: 11px; }
.explore { position: absolute; right: 12px; bottom: 9px; display: flex; align-items: center; justify-content: space-between; width: 170px; height: 37px; padding: 0 12px 0 13px; border-radius: 19px; background: #ffc600; font-size: 11px; font-weight: 600; line-height: 16px; color: #1d3b37; }
.explore span { width: 18px; height: 18px; border-radius: 9px; background: #fff; font-size: 10px; line-height: 18px; text-align: center; color: #ffc600; }

.waitlist .shot-bar { height: 23px; }
.waitlist .shot-body { height: 501px; }
.side { position: relative; display: flex; flex: none; flex-direction: column; align-items: center; gap: 16px; width: 49px; padding-top: 14px; background: #e4e4e4; }
.side svg { width: 14px; height: 14px; }
.side .logo { width: 16px; height: 16px; margin-bottom: 17px; }
.expand { position: absolute; z-index: 1; right: -12px; top: 30px; display: grid; place-items: center; width: 24px; height: 24px; border: 1px solid #cfcfcf; border-radius: 12px; background: #efefef; }
.side .expand svg { width: 10px; height: 10px; }
.panel { flex: 1; min-width: 0; color: #333; font-size: 10px; line-height: 16px; }
.panel-top { display: flex; align-items: center; height: 42px; padding: 0 18px; border-bottom: 1px solid #dcdcdc; }
.pill-search { display: flex; align-items: center; gap: 7px; width: 132px; height: 27px; padding-left: 12px; border-radius: 14px; background: #dfdfdf; color: #777; }
.pill-search svg { width: 10px; height: 10px; }
input { min-width: 0; width: 100%; padding: 0; border: 0; background: none; font: inherit; color: #333; }
input::placeholder { color: #777; opacity: 1; }
.income { display: flex; align-items: center; gap: 6px; margin: 0 31px 0 auto; font-size: 8px; line-height: 12px; }
.income svg { width: 14px; height: 10px; }
.income b { display: block; font-size: 9px; font-weight: 600; }
.plus { display: grid; place-items: center; width: 27px; height: 27px; border-radius: 14px; background: #1269bd; }
.plus svg { width: 9px; height: 9px; }
.messages { display: flex; align-items: center; justify-content: center; gap: 7px; width: 85px; height: 27px; margin-left: 12px; border-radius: 14px; background: #1269bd; font-size: 10px; font-weight: 700; color: #fff; }
.messages svg { width: 13px; height: 12px; }
.sep { width: 1px; height: 24px; margin-left: 11px; background: #e0e0e0; }
.sm { width: 27px; height: 27px; margin-left: 145px; border-radius: 14px; background: linear-gradient(30deg, #df3516, #e58a75); font-size: 9px; line-height: 27px; text-align: center; color: #5a1a10; }
.panel-title { display: flex; align-items: center; height: 46px; padding: 0 20px 0 21px; }
.back { display: grid; place-items: center; width: 15px; height: 15px; border-radius: 3px; background: #e2e2e2; }
.back svg { width: 11px; height: 11px; }
.panel-title h3 { flex: 1; margin-left: 6px; font-size: 14px; font-weight: 600; line-height: 20px; color: #222; }
.add { display: block; width: 66px; height: 23px; border-radius: 3px; background: #1371cb; font-size: 10px; font-weight: 700; color: #fff; }
.tip-below { top: calc(100% + 6px); right: -33px; width: 295px; height: 140px; }
.tip-below p { height: 89px; }
.tip-below::after { bottom: 100%; left: 229px; border-bottom-color: #fff; border-top: 0; }
.filters { display: flex; gap: 6px; height: 23px; margin: 12px 21px 0; }
.client-search { display: flex; align-items: center; gap: 6px; width: 204px; padding-left: 8px; border: 1px solid #cacaca; border-radius: 3px; color: #555; }
.client-search svg { width: 13px; height: 13px; }
.client-search input::placeholder { color: #aaa; }
.filter { display: flex; align-items: center; justify-content: center; gap: 6px; width: 78px; border-radius: 3px; background: #e5e5e5; font-size: 10px; font-weight: 600; color: #3c3c3c; }
.filter svg { width: 12px; height: 12px; }
.filter.loc { width: 104px; }
.filter.loc i { margin-left: 3px; border: 3px solid transparent; border-top-color: #333; border-bottom: 0; }
.filter.view { width: 23px; margin-right: -3px; }
.filter.view svg { width: 14px; }
.filter.on { background: #d8e2ec; }
.client { display: grid; grid-template-columns: 137px 195px 194px 1fr; margin: 22px 0 0 21px; font-size: 10px; line-height: 18px; }
.client > div { display: flex; flex-direction: column; white-space: nowrap; }
.client a { font-size: 11px; font-weight: 600; color: #1b6dbd; }
.client b { font-weight: 600; }
.client small { font-size: 9px; line-height: 14px; color: #666; }
.client span { margin-top: 3px; color: #555; }

/* Taskbar */
.taskbar { display: flex; flex: none; height: 40px; padding-right: 5px; background: #1f1c1a; }
.task { position: relative; display: grid; place-items: center; width: 49px; }
.task > svg { width: 24px; height: 24px; }
.task.start { width: 45px; padding-right: 4px; }
.task.start svg { width: 16px; height: 17px; }
.task.active { background: #4a4745; }
.task.open::after { content: ""; position: absolute; left: 4px; right: 4px; bottom: 0; height: 2px; background: #76b9ed; }
.task.active::after { left: 0; right: 0; }
.clock { display: flex; flex-direction: column; justify-content: center; margin-left: auto; font-size: 11px; line-height: 18px; text-align: center; color: #fff; }
```
